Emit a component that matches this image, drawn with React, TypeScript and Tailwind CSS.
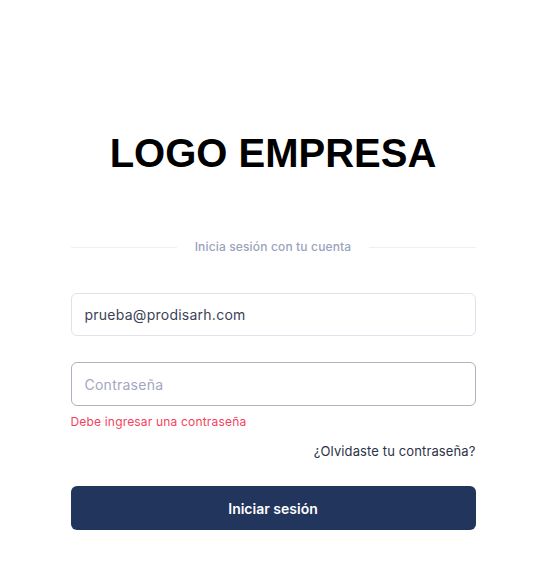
export default function App() {
    return (
        <div className="min-h-[575px] bg-white font-['Inter',sans-serif]">
            <div className="mx-auto flex w-[405px] flex-col pt-[129px]">
                <h1 className="text-center font-['Liberation_Sans',Arial,sans-serif] text-[40px] leading-[48px] font-bold text-black">
                    LOGO EMPRESA
                </h1>

                <div className="mt-[62px] flex items-center gap-[18px]">
                    <div className="h-px flex-1 bg-[#eef0f3]" />
                    <span className="text-[12px] leading-4 font-medium tracking-[0.15px] text-[#9aa3bd]">
                        Inicia sesión con tu cuenta
                    </span>
                    <div className="h-px flex-1 bg-[#eef0f3]" />
                </div>

                <form className="mt-[38px] flex flex-col">
                    <input
                        type="email"
                        defaultValue="prueba@prodisarh.com"
                        className="h-[43px] w-full rounded-md border border-[#dfe2ea] px-[13px] text-[14px] tracking-[0.25px] text-[#3b4256] outline-none"
                    />

                    <input
                        type="password"
                        placeholder="Contraseña"
                        className="mt-[26px] h-[44px] w-full rounded-md border border-[#aeb1c0] px-[13px] text-[14px] tracking-[0.25px] text-[#3b4256] outline-none placeholder:text-[#a3a7bf]"
                    />
                    <p className="mt-[8px] text-[12px] leading-4 tracking-[0.18px] text-[#f43f5e]">
                        Debe ingresar una contraseña
                    </p>

                    <div className="mt-[13px] flex justify-end">
                        <a className="text-[13px] leading-4 tracking-[0.12px] text-[#2b3347]">
                            ¿Olvidaste tu contraseña?
                        </a>
                    </div>

                    <button
                        type="button"
                        className="mt-[27px] h-[44px] w-full rounded-md bg-[#22355d] text-[14px] font-semibold text-white"
                    >
                        Iniciar sesión
                    </button>
                </form>
            </div>
        </div>
    );
}
